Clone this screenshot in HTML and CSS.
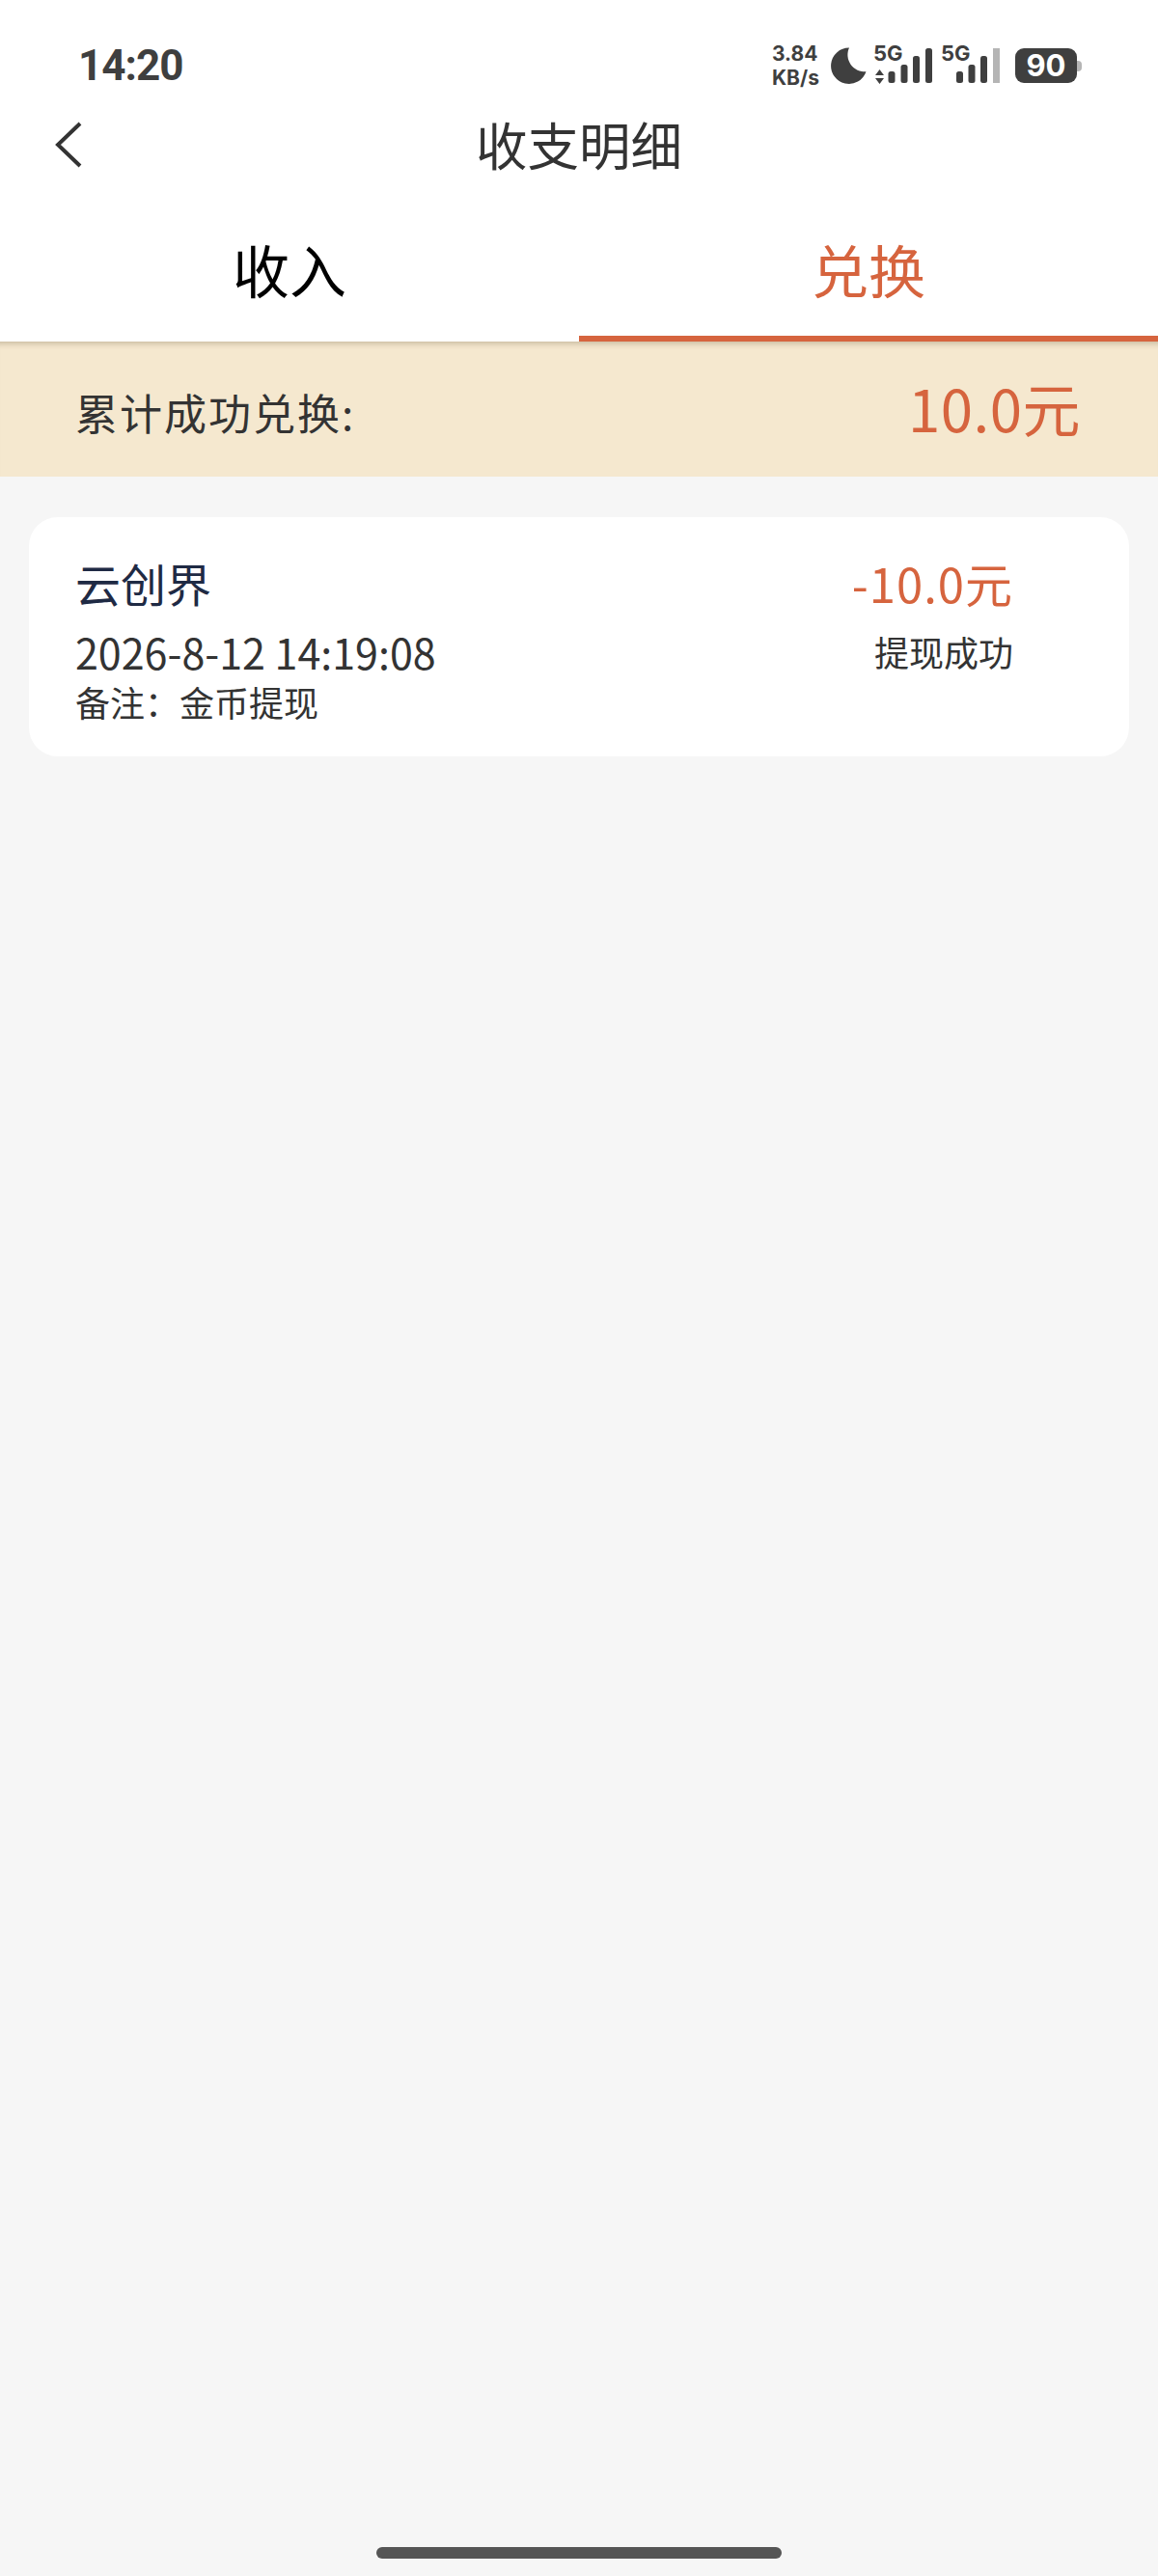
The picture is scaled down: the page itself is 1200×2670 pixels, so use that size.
FILE: index.html
```html
<!DOCTYPE html>
<html lang="zh-CN">
<head>
<meta charset="UTF-8">
<meta name="viewport" content="width=device-width, initial-scale=1.0">
<title>收支明细</title>
<link rel="stylesheet" href="styles.css">
</head>
<body>

<div class="page">
    <div class="top">
        <div class="status-bar">
            <span class="time">14:20</span>
            <div class="status-icons">
                <div class="speed"><span>3.84</span><span>KB/s</span></div>
                <svg class="moon" width="38" height="38" viewBox="0 0 38 38">
                    <path d="M20 0.500A18.700 18.700 0 1 0 37.500 25.200A17.500 17.500 0 0 1 20 0.500Z" fill="#3f3f3f"/>
                </svg>
                <svg class="signal" width="62" height="48" viewBox="0 0 62 48">
                    <text x="0" y="22" class="net-label">5G</text>
                    <path d="M6.500 31L11 37H2Z M6.500 46L11 40H2Z" fill="#3f3f3f"/>
                    <rect x="15.500" y="33" width="7" height="12" rx="2.500" fill="#3f3f3f"/>
                    <rect x="28.500" y="26" width="7" height="19" rx="2.500" fill="#3f3f3f"/>
                    <rect x="41" y="17" width="7" height="28" rx="2.500" fill="#3f3f3f"/>
                    <rect x="54" y="9" width="7" height="36" rx="2.500" fill="#3f3f3f"/>
                </svg>
                <svg class="signal signal-last" width="62" height="48" viewBox="0 0 62 48">
                    <text x="0" y="22" class="net-label">5G</text>
                    <rect x="16" y="33" width="7" height="12" rx="2.500" fill="#3f3f3f"/>
                    <rect x="28.500" y="26" width="7" height="19" rx="2.500" fill="#3f3f3f"/>
                    <rect x="41" y="17" width="7" height="28" rx="2.500" fill="#3f3f3f"/>
                    <rect x="54" y="9" width="7" height="36" fill="#b5b5b5"/>
                </svg>
                <div class="battery">
                    <span class="battery-level">90</span>
                    <span class="battery-tip"></span>
                </div>
            </div>
        </div>

        <div class="nav-bar">
            <svg class="back" width="30" height="48" viewBox="0 0 30 48">
                <path d="M27 2L4 24L27 46" fill="none" stroke="#333333" stroke-width="4"/>
            </svg>
            <h1 class="nav-title">收支明细</h1>
        </div>

        <div class="tabs">
            <div class="tab">收入</div>
            <div class="tab tab-active">兑换</div>
        </div>
    </div>

    <div class="summary">
        <span class="summary-label">累计成功兑换:</span>
        <span class="summary-value">10.0元</span>
    </div>

    <div class="list">
        <div class="record">
            <div class="record-left">
                <div class="record-name">云创界</div>
                <div class="record-date">2026-8-12 14:19:08</div>
                <div class="record-note">备注&#xFF1A;金币提现</div>
            </div>
            <div class="record-right">
                <div class="record-amount">-10.0元</div>
                <div class="record-status">提现成功</div>
            </div>
        </div>
    </div>

    <div class="home-bar"></div>
</div>

</body>
</html>
```

FILE: styles.css
```css
* {
    box-sizing: border-box;
}
body {
    margin: 0;
    font-family: "Noto Sans CJK SC", "Noto Sans", sans-serif;
    color: #333333;
    background-color: #f6f6f6;
}
.page {
    display: flex;
    flex-direction: column;
    min-height: 2670px;
}
.top {
    background-color: #ffffff;
}
.status-bar {
    display: flex;
    justify-content: space-between;
    align-items: center;
    height: 112px;
    padding: 24px 79px 0 81px;
}
.time {
    font-family: Roboto, sans-serif;
    font-size: 44px;
    font-weight: 700;
    color: #3f3f3f;
    letter-spacing: -1px;
}
.status-icons {
    display: flex;
    align-items: center;
}
.speed {
    display: flex;
    flex-direction: column;
    width: 60px;
    font-family: Inter, sans-serif;
    font-size: 21px;
    font-weight: 700;
    line-height: 25px;
    color: #3f3f3f;
}
.moon {
    margin-right: 7px;
}
.signal {
    margin-right: 8px;
    margin-bottom: 6px;
}
.signal-last {
    margin-right: 15px;
}
.net-label {
    font-family: Inter, sans-serif;
    font-size: 22px;
    font-weight: 700;
    fill: #3f3f3f;
}
.battery {
    display: flex;
    align-items: center;
}
.battery-level {
    width: 64px;
    height: 36px;
    border-radius: 9px;
    background-color: #3f3f3f;
    color: #ffffff;
    font-family: Inter, sans-serif;
    font-size: 31px;
    font-weight: 700;
    line-height: 36px;
    text-align: center;
}
.battery-tip {
    width: 5px;
    height: 11px;
    border-radius: 0 4px 4px 0;
    background-color: #b5b5b5;
}
.nav-bar {
    display: flex;
    justify-content: center;
    align-items: center;
    position: relative;
    height: 72px;
    margin-top: 2px;
}
.back {
    position: absolute;
    left: 56px;
    top: 12px;
}
.nav-title {
    margin: 0 0 3px;
    font-size: 53.500px;
    font-weight: 400;
    line-height: 72px;
}
.tabs {
    display: flex;
    height: 168px;
}
.tab {
    flex: 1;
    padding-top: 51px;
    font-size: 59px;
    line-height: 84px;
    text-align: center;
    color: #000000;
}
.tab-active {
    color: #d6643e;
    border-bottom: 6px solid #d6643e;
}
.summary {
    display: flex;
    justify-content: space-between;
    align-items: center;
    height: 140px;
    padding: 0 80px 0 78px;
    background-color: #f5e8cf;
    box-shadow: inset 0 8px 6px -6px rgba(90, 70, 40, 0.3);
}
.summary-label {
    margin-top: 5px;
    font-size: 44px;
    letter-spacing: 2px;
}
.summary-value {
    margin-bottom: 5px;
    font-size: 60px;
    letter-spacing: 0.500px;
    color: #d6643e;
}
.list {
    padding: 42px 30px;
}
.record {
    display: flex;
    justify-content: space-between;
    height: 248px;
    padding: 38px 120px 0 48px;
    border-radius: 30px;
    background-color: #ffffff;
}
.record-name {
    font-size: 47px;
    line-height: 60px;
    color: #1f2a44;
}
.record-date {
    margin-top: 13px;
    font-size: 43px;
    line-height: 56px;
}
.record-note {
    font-size: 36px;
    line-height: 48px;
}
.record-right {
    text-align: right;
}
.record-amount {
    font-size: 49px;
    line-height: 60px;
    letter-spacing: 1px;
    color: #d6643e;
}
.record-status {
    margin-top: 16px;
    font-size: 36px;
    line-height: 50px;
}
.home-bar {
    width: 420px;
    height: 12px;
    margin: auto auto 18px;
    border-radius: 6px;
    background-color: #555555;
}
```
